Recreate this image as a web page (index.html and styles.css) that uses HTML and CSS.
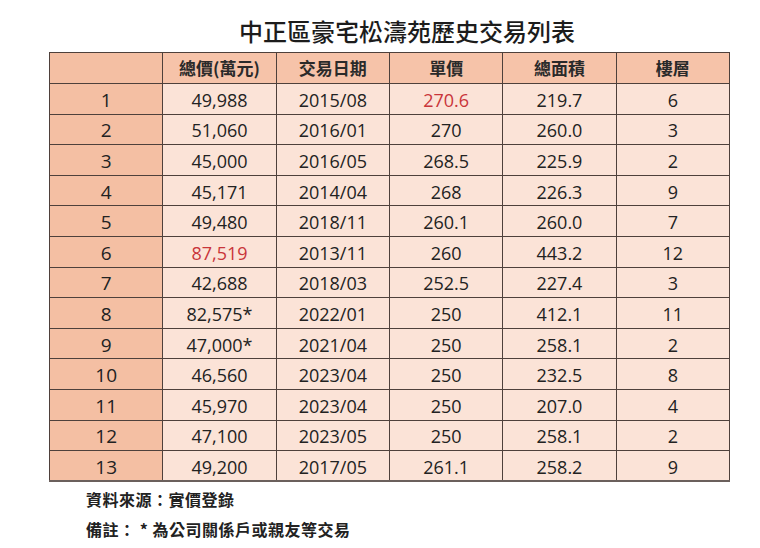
FILE: index.html
```html
<!DOCTYPE html>
<html lang="zh-Hant">
<head>
<meta charset="utf-8">
<link rel="stylesheet" href="styles.css">
</head>
<body>
<div class="page">
  <h1 class="title">中正區豪宅松濤苑歷史交易列表</h1>
  <table class="deals">
    <thead>
      <tr><th class="idx"></th><th>總價(萬元)</th><th>交易日期</th><th>單價</th><th>總面積</th><th>樓層</th></tr>
    </thead>
    <tbody>
      <tr><td class="idx">1</td><td>49,988</td><td>2015/08</td><td class="red">270.6</td><td>219.7</td><td>6</td></tr>
      <tr><td class="idx">2</td><td>51,060</td><td>2016/01</td><td>270</td><td>260.0</td><td>3</td></tr>
      <tr><td class="idx">3</td><td>45,000</td><td>2016/05</td><td>268.5</td><td>225.9</td><td>2</td></tr>
      <tr><td class="idx">4</td><td>45,171</td><td>2014/04</td><td>268</td><td>226.3</td><td>9</td></tr>
      <tr><td class="idx">5</td><td>49,480</td><td>2018/11</td><td>260.1</td><td>260.0</td><td>7</td></tr>
      <tr><td class="idx">6</td><td class="red">87,519</td><td>2013/11</td><td>260</td><td>443.2</td><td>12</td></tr>
      <tr><td class="idx">7</td><td>42,688</td><td>2018/03</td><td>252.5</td><td>227.4</td><td>3</td></tr>
      <tr><td class="idx">8</td><td>82,575*</td><td>2022/01</td><td>250</td><td>412.1</td><td>11</td></tr>
      <tr><td class="idx">9</td><td>47,000*</td><td>2021/04</td><td>250</td><td>258.1</td><td>2</td></tr>
      <tr><td class="idx">10</td><td>46,560</td><td>2023/04</td><td>250</td><td>232.5</td><td>8</td></tr>
      <tr><td class="idx">11</td><td>45,970</td><td>2023/04</td><td>250</td><td>207.0</td><td>4</td></tr>
      <tr><td class="idx">12</td><td>47,100</td><td>2023/05</td><td>250</td><td>258.1</td><td>2</td></tr>
      <tr><td class="idx">13</td><td>49,200</td><td>2017/05</td><td>261.1</td><td>258.2</td><td>9</td></tr>
    </tbody>
  </table>
  <div class="notes">
    <p>資料來源：實價登錄</p>
    <p>備註： * 為公司關係戶或親友等交易</p>
  </div>
</div>
</body>
</html>
```

FILE: styles.css
```css
html, body {
  margin: 0;
  padding: 0;
  background: #ffffff;
}

body {
  font-family: "Open Sans", "Noto Sans CJK TC", sans-serif;
  color: #222222;
}

.page {
  width: 760px;
  height: 548px;
  padding-left: 49px;
  box-sizing: border-box;
}

.title {
  width: 680px;
  box-sizing: border-box;
  margin: 0;
  padding: 16px 0 0 36px;
  height: 52px;
  font-family: "Noto Sans CJK TC", sans-serif;
  font-size: 24px;
  line-height: 30px;
  font-weight: 500;
  text-align: center;
  color: #1c1c1c;
}

.deals {
  width: 681px;
  table-layout: fixed;
  border-collapse: collapse;
  border-bottom: 2px solid #6b605c;
}

.deals thead tr {
  height: 31px;
}

.deals tbody tr {
  height: 30.6px;
}

.deals th,
.deals td {
  border: 1px solid #4e403b;
  padding: 0;
  text-align: center;
  vertical-align: middle;
  font-size: 18px;
  line-height: 18px;
  background: #fbe3d7;
}

.deals th {
  background: #f6c3a9;
  font-family: "Noto Sans CJK TC", sans-serif;
  font-weight: 700;
  font-size: 17px;
  color: #2a2a2a;
}

.deals td {
  padding-top: 2px;
}

.deals .idx {
  background: #f4bfa3;
  font-size: 19px;
}

.deals .red {
  color: #c9353a;
}

.notes {
  padding-left: 37px;
  padding-top: 2px;
}

.notes p {
  margin: 0;
  font-family: "Noto Sans CJK TC", sans-serif;
  font-size: 16px;
  line-height: 30px;
  font-weight: 700;
  letter-spacing: 0.5px;
  color: #222222;
}
```
